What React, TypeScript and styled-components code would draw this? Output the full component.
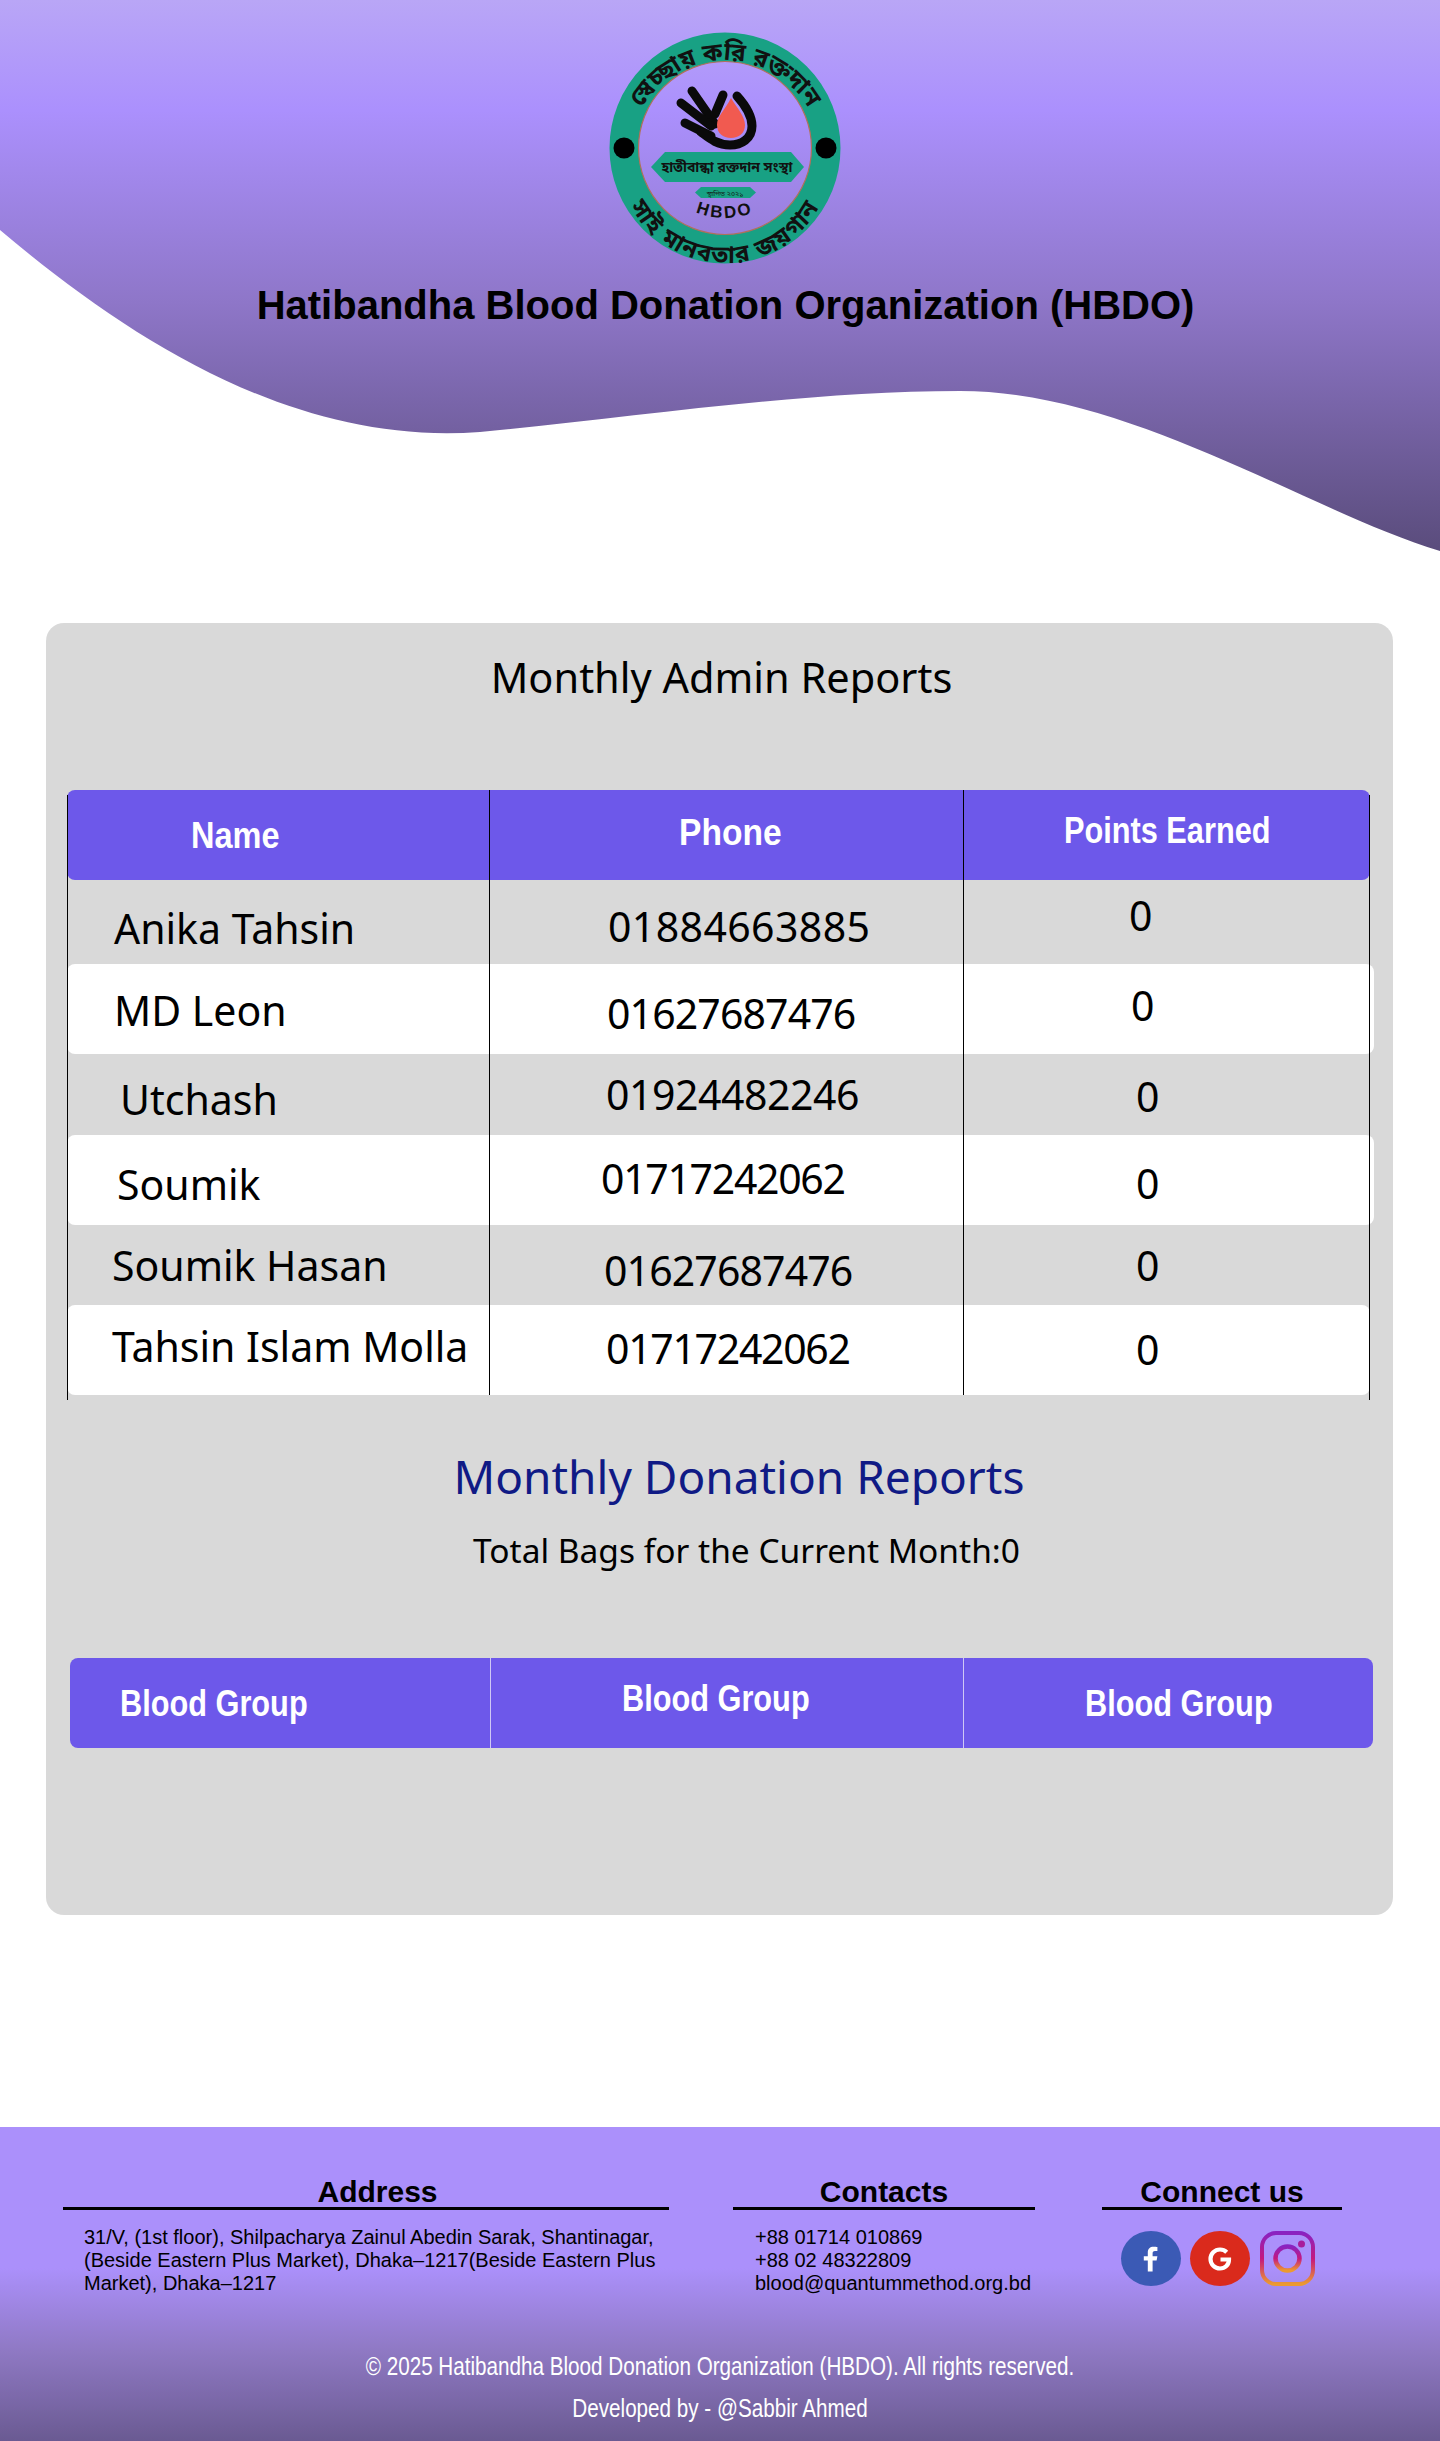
import React from "react";
import styled, { createGlobalStyle } from "styled-components";

const GlobalStyle = createGlobalStyle`
  html, body {
    margin: 0;
    padding: 0;
    background: #fff;
    font-family: "Liberation Sans", Arial, sans-serif;
  }
`;

const bodyFont = `"Noto Sans", "Open Sans", sans-serif`;
const bengaliFont = `"Noto Sans Bengali", "Noto Sans", sans-serif`;

const Page = styled.div`
  width: 1440px;
  height: 2441px;
  display: flex;
  flex-direction: column;
  overflow: hidden;
`;

const Header = styled.header`
  height: 551px;
  flex: none;
  display: flex;
  flex-direction: column;
  align-items: center;
  padding-top: 28px;
  box-sizing: border-box;
  background: linear-gradient(180deg, #b9a6f6 0%, #ab90fd 20%, #8e76c8 55%, #5a4c7c 100%);
  clip-path: path("M0 0 H1440 V551 C1310 512 1130 391 960 391 C800 391 630 418 480 432 C295 446 130 340 0 230 Z");
`;

const LogoSvg = styled.svg`
  width: 240px;
  height: 240px;
  flex: none;
  margin-left: 10px;
  overflow: visible;
`;

const SiteTitle = styled.h1`
  margin: 15px 0 0 11px;
  font-size: 40px;
  line-height: 45px;
  font-weight: 700;
  color: #000;
  white-space: nowrap;
`;

const Card = styled.main`
  margin: 72px 47px 0 46px;
  height: 1292px;
  flex: none;
  background: #d9d9d9;
  border-radius: 18px;
  padding-top: 27px;
  box-sizing: border-box;
`;

const CardTitle = styled.h2`
  margin: 0 0 0 4px;
  height: 140px;
  font: 400 41.5px/54px ${bodyFont};
  color: #000;
  text-align: center;
`;

const AdminTable = styled.div`
  position: relative;
  width: 1303px;
  height: 605px;
  margin-left: 21px;

  &::before,
  &::after {
    content: "";
    position: absolute;
    top: 5px;
    bottom: -5px;
    width: 1px;
    background: #000;
  }
  &::before {
    left: 0;
  }
  &::after {
    right: 0;
  }
`;

const Row = styled.div<{ $height: number; $white?: boolean; $extend?: boolean }>`
  display: grid;
  grid-template-columns: 423px 474px 406px;
  height: ${(p) => p.$height}px;
  background: ${(p) => (p.$white ? "#fff" : "transparent")};
  border-radius: 8px;
  width: ${(p) => (p.$extend ? 1307 : 1303)}px;
`;

const Cell = styled.div<{ $x: number; $y: number; $spacing?: number; $last?: boolean }>`
  font: 400 41px/51px ${bodyFont};
  letter-spacing: ${(p) => p.$spacing ?? 0}px;
  color: #000;
  white-space: nowrap;
  padding-top: ${(p) => p.$y}px;
  box-sizing: border-box;
  border-right: ${(p) => (p.$last ? "none" : "1px solid #000")};
  padding-left: ${(p) => p.$x}px;
`;

const HeadRow = styled.div`
  display: grid;
  grid-template-columns: 423px 474px 406px;
  height: 90px;
  background: #6d58ea;
  border-radius: 8px;
`;

const HeadCell = styled.div<{ $x: number; $y: number; $line?: string }>`
  box-sizing: border-box;
  padding: ${(p) => p.$y}px 0 0 ${(p) => p.$x}px;
  border-right: ${(p) => (p.$line ? `1px solid ${p.$line}` : "none")};
`;

const NarrowLabel = styled.span<{ $squeeze: number }>`
  display: inline-block;
  font: 700 37px/44px "Liberation Sans", sans-serif;
  color: #fff;
  white-space: nowrap;
  transform: scaleX(${(p) => p.$squeeze});
  transform-origin: left center;
`;

const DonationTitle = styled.h2`
  margin: 50px 0 0 39px;
  font: 400 46px/62px ${bodyFont};
  color: #101a85;
  text-align: center;
`;

const BagsLine = styled.p`
  margin: 20px 0 0 54px;
  font: 400 33.5px/46px ${bodyFont};
  color: #000;
  text-align: center;
`;

const GroupRow = styled.div`
  display: grid;
  grid-template-columns: 421px 473px 1fr;
  width: 1303px;
  height: 90px;
  margin: 85px 0 0 24px;
  background: #6d58ea;
  border-radius: 8px;
`;

const Footer = styled.footer`
  margin-top: 212px;
  flex: 1;
  background: linear-gradient(180deg, #ab90fb 0%, #ab90fb 45%, #8e78c2 72%, #6a5a92 100%);
`;

const FooterColumns = styled.div`
  display: flex;
  padding: 50px 0 0 63px;
  height: 218px;
  box-sizing: border-box;
`;

const FooterColumn = styled.section<{ $width: number; $gap: number }>`
  width: ${(p) => p.$width}px;
  margin-right: ${(p) => p.$gap}px;
  flex: none;
`;

const ColumnTitle = styled.h3<{ $shift?: number }>`
  margin: 0;
  padding-left: ${(p) => p.$shift ?? 0}px;
  font-size: 30px;
  line-height: 30px;
  font-weight: 700;
  color: #000;
  text-align: center;
  border-bottom: 3px solid #000;
`;

const ColumnText = styled.p<{ $indent: number }>`
  margin: 16px 0 0 ${(p) => p.$indent}px;
  font-size: 20px;
  line-height: 23px;
  color: #000;
`;

const SocialRow = styled.div`
  display: flex;
  align-items: center;
  margin: 21px 0 0 19px;
  gap: 9px;
`;

const SocialBadge = styled.span<{ $bg: string }>`
  width: 60px;
  height: 55px;
  border-radius: 50%;
  background: ${(p) => p.$bg};
  display: flex;
  align-items: center;
  justify-content: center;
`;

const InstaIcon = styled.svg`
  width: 55px;
  height: 55px;
  margin-left: 1px;
`;

const Copy = styled.p`
  margin: 0;
  text-align: center;
  font: 400 25px/42px "Liberation Sans", sans-serif;
  color: #fff;
  transform: scaleX(0.826);
`;

const people = [
  { h: 84, name: "Anika Tahsin", nx: 47, ny: 23, phone: "01884663885", sp: 0.4, px: 118, py: 21, ox: 165, oy: 10 },
  { h: 90, name: "MD Leon", nx: 47, ny: 21, phone: "01627687476", sp: -0.87, px: 117, py: 24, ox: 167, oy: 16, white: true, extend: true },
  { h: 81, name: "Utchash", nx: 53, ny: 20, phone: "01924482246", sp: -0.45, px: 116, py: 15, ox: 172, oy: 17 },
  { h: 90, name: "Soumik", nx: 50, ny: 24, phone: "01717242062", sp: -1.3, px: 111, py: 18, ox: 172, oy: 23, white: true, extend: true },
  { h: 80, name: "Soumik Hasan", nx: 45, ny: 15, phone: "01627687476", sp: -0.87, px: 114, py: 20, ox: 172, oy: 15 },
  { h: 90, name: "Tahsin Islam Molla", nx: 45, ny: 16, phone: "01717242062", sp: -1.3, px: 116, py: 18, ox: 172, oy: 19, white: true },
];

const Logo = () => (
  <LogoSvg viewBox="0 0 240 240">
    <defs>
      <path id="ringTop" d="M24 128 A96 96 0 0 1 216 128" />
      <path id="ringBottom" d="M13 128 A107 107 0 0 0 227 128" />
      <path id="hbdoArc" d="M78 178 Q120 202 162 178" />
    </defs>
    <circle cx="120" cy="120" r="101" fill="none" stroke="#18a184" strokeWidth="29" />
    <circle cx="120" cy="120" r="86.500" fill="none" stroke="#b0705a" strokeWidth="1.200" />
    <circle cx="19" cy="120" r="10.500" fill="#000" />
    <circle cx="221" cy="120" r="10.500" fill="#000" />
    <text fontFamily={bengaliFont} fontSize="24.500" fontWeight="700" fill="#111">
      <textPath href="#ringTop" startOffset="50%" textAnchor="middle">
        স্বেচ্ছায় করি রক্তদান
      </textPath>
    </text>
    <text fontFamily={bengaliFont} fontSize="24" fontWeight="700" letterSpacing="1.500" fill="#111">
      <textPath href="#ringBottom" startOffset="50%" textAnchor="middle">
        সাই মানবতার জয়গান
      </textPath>
    </text>
    <g fill="none" stroke="#0a0a0a" strokeWidth="9" strokeLinecap="round">
      <path d="M87 63 L110 96" />
      <path d="M76 75 L106 98" />
      <path d="M80 95 L106 108" />
      <path d="M118 67 L110 86" />
      <path d="M132 68 C141 78 147 88 147 98 C147 111 136 117 125 117 C112 117 104 110 96 104" />
    </g>
    <path d="M126 70 C120 82 112 88 112 97 C112 105 118 110 126 110 C134 110 140 105 140 97 C140 88 132 80 126 70 Z" fill="#f15a50" />
    <path d="M46 139 L60 124 H186 L199 139 L186 154 H60 Z" fill="#18a184" />
    <text x="122" y="144" fontFamily={bengaliFont} fontSize="14" fontWeight="700" textAnchor="middle" fill="#111">
      হাতীবান্ধা রক্তদান সংস্থা
    </text>
    <path d="M90 164.500 L96 159 H145 L151 164.500 L145 170 H96 Z" fill="#18a184" />
    <text x="120" y="167.500" fontFamily={bengaliFont} fontSize="7" textAnchor="middle" fill="#111">
      স্থাপিত ২০২১
    </text>
    <text fontFamily={`"Liberation Sans", sans-serif`} fontSize="17" fontWeight="700" letterSpacing="2.500" fill="#111">
      <textPath href="#hbdoArc" startOffset="50%" textAnchor="middle">
        HBDO
      </textPath>
    </text>
  </LogoSvg>
);

const App: React.FC = () => {
  return (
    <>
      <GlobalStyle />
      <Page>
        <Header>
          <Logo />
          <SiteTitle>Hatibandha Blood Donation Organization (HBDO)</SiteTitle>
        </Header>

        <Card>
          <CardTitle>Monthly Admin Reports</CardTitle>
          <AdminTable>
            <HeadRow>
              <HeadCell $x={124} $y={24} $line="#000"><NarrowLabel $squeeze={0.878}>Name</NarrowLabel></HeadCell>
              <HeadCell $x={189} $y={21} $line="#000"><NarrowLabel $squeeze={0.907}>Phone</NarrowLabel></HeadCell>
              <HeadCell $x={100} $y={19}><NarrowLabel $squeeze={0.83}>Points Earned</NarrowLabel></HeadCell>
            </HeadRow>
            {people.map((p) => (
              <Row key={p.name} $height={p.h} $white={p.white} $extend={p.extend}>
                <Cell $x={p.nx} $y={p.ny}>{p.name}</Cell>
                <Cell $x={p.px} $y={p.py} $spacing={p.sp}>{p.phone}</Cell>
                <Cell $x={p.ox} $y={p.oy} $last>0</Cell>
              </Row>
            ))}
          </AdminTable>
          <DonationTitle>Monthly Donation Reports</DonationTitle>
          <BagsLine>Total Bags for the Current Month:0</BagsLine>
          <GroupRow>
            <HeadCell $x={50} $y={24} $line="#cfc8f5"><NarrowLabel $squeeze={0.83}>Blood Group</NarrowLabel></HeadCell>
            <HeadCell $x={131} $y={19} $line="#cfc8f5"><NarrowLabel $squeeze={0.83}>Blood Group</NarrowLabel></HeadCell>
            <HeadCell $x={121} $y={24}><NarrowLabel $squeeze={0.83}>Blood Group</NarrowLabel></HeadCell>
          </GroupRow>
        </Card>

        <Footer>
          <FooterColumns>
            <FooterColumn $width={606} $gap={64}>
              <ColumnTitle $shift={23}>Address</ColumnTitle>
              <ColumnText $indent={21}>
                31/V, (1st floor), Shilpacharya Zainul Abedin Sarak, Shantinagar, (Beside Eastern Plus Market), Dhaka–1217(Beside Eastern Plus Market), Dhaka–1217
              </ColumnText>
            </FooterColumn>
            <FooterColumn $width={302} $gap={67}>
              <ColumnTitle>Contacts</ColumnTitle>
              <ColumnText $indent={22}>
                +88 01714 010869
                <br />
                +88 02 48322809
                <br />
                blood@quantummethod.org.bd
              </ColumnText>
            </FooterColumn>
            <FooterColumn $width={240} $gap={0}>
              <ColumnTitle>Connect us</ColumnTitle>
              <SocialRow>
                <SocialBadge $bg="#3b5ab5">
                  <svg width="20" height="30" viewBox="0 0 20 30">
                    <path d="M6 30V17H1v-5h5V8c0-5 3-7 7-7 2 0 4 .2 5 .3V6h-3c-2.400 0-3 1.200-3 3v3h6l-1 5h-5v13z" fill="#fff" transform="translate(2 2) scale(.8 .85)" />
                  </svg>
                </SocialBadge>
                <SocialBadge $bg="#da2a1c">
                  <svg width="26" height="26" viewBox="0 0 26 26" fill="none">
                    <path d="M13.500 13.500H22C22 19 18 22.500 13 22.500C7.700 22.500 3.500 18.300 3.500 13S7.700 3.500 13 3.500C15.700 3.500 18 4.500 19.700 6.200" stroke="#fff" strokeWidth="4.200" />
                  </svg>
                </SocialBadge>
                <InstaIcon viewBox="0 0 55 55">
                  <defs>
                    <linearGradient id="instaGrad" x1="0" y1="0" x2="0" y2="1">
                      <stop offset="0" stopColor="#8a22c0" />
                      <stop offset="0.5" stopColor="#c4187e" />
                      <stop offset="1" stopColor="#ec9a30" />
                    </linearGradient>
                  </defs>
                  <rect x="2" y="2" width="51" height="51" rx="14" fill="none" stroke="url(#instaGrad)" strokeWidth="4" />
                  <circle cx="27.500" cy="27.500" r="12" fill="none" stroke="url(#instaGrad)" strokeWidth="4.500" />
                  <circle cx="41.500" cy="13" r="3.500" fill="#a81c9c" />
                </InstaIcon>
              </SocialRow>
            </FooterColumn>
          </FooterColumns>
          <Copy>© 2025 Hatibandha Blood Donation Organization (HBDO). All rights reserved.</Copy>
          <Copy>Developed by - @Sabbir Ahmed</Copy>
        </Footer>
      </Page>
    </>
  );
};

export default App;
